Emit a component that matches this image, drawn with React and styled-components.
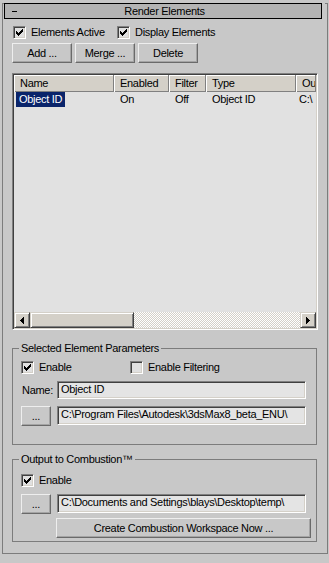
import React from "react";
import styled, { createGlobalStyle } from "styled-components";

const GlobalStyle = createGlobalStyle`
  html, body {
    margin: 0;
    padding: 0;
    background: #c8c8c8;
  }
  body {
    font-family: "Liberation Sans", Arial, sans-serif;
    font-size: 11px;
    line-height: 13px;
    color: #000;
    letter-spacing: -0.3px;
  }
  * {
    box-sizing: border-box;
  }
`;

const FACE = "#c8c8c8";

const Page = styled.div`
  width: 329px;
  height: 563px;
  background: ${FACE};
  padding-top: 11px;
  overflow: hidden;
`;

const Rollout = styled.div`
  position: relative;
  margin-left: 2px;
  width: 326px;
  height: 551px;
  border: 1px solid #7c7c7c;
  border-top: none;

  &::before,
  &::after {
    content: "";
    position: absolute;
    top: 0;
    width: 2px;
    height: 1px;
    background: #7c7c7c;
  }
  &::before {
    left: 0;
  }
  &::after {
    right: 0;
  }
`;

const TitleBar = styled.div`
  position: relative;
  z-index: 1;
  display: flex;
  align-items: center;
  margin: -8px 0 0 1px;
  width: 318px;
  height: 16px;
  padding: 0 7px;
  background: #b4b4b4;
  border: 1px solid #000;
`;

const Collapse = styled.span`
  width: 5px;
  height: 1px;
  background: #000;
`;

const TitleText = styled.span`
  flex: 1;
  text-align: center;
  padding-right: 2px;
`;

const Body = styled.div`
  display: flex;
  flex-direction: column;
  padding-left: 9px;
`;

const CheckRow = styled.div`
  display: grid;
  grid-template-columns: ${(p) => p.$first}px auto;
  margin-top: ${(p) => p.$top}px;
  padding-left: ${(p) => p.$left || 0}px;
  height: 13px;
`;

const CheckLabel = styled.label`
  display: flex;
  align-items: center;
  gap: 5px;
  height: 13px;
  white-space: nowrap;
`;

const Box = styled.span`
  display: flex;
  align-items: center;
  justify-content: center;
  flex: none;
  width: 13px;
  height: 13px;
  border: 1px solid;
  border-color: #808080 #fff #fff #808080;
  box-shadow: inset 1px 1px #404040, inset -1px -1px #d4d0c8;
  background: #e0e0e0;
`;

const CheckMark = () => (
  <svg width="7" height="7" viewBox="0 0 7 7" shapeRendering="crispEdges">
    <path
      fill="#000"
      d="M6 0h1v1h-1z M5 1h2v1h-2z M0 2h1v1h-1z M4 2h3v1h-3z M0 3h2v1h-2z M3 3h3v1h-3z M0 4h5v1h-5z M1 5h3v1h-3z M2 6h1v1h-1z"
    />
  </svg>
);

const Check = ({ checked, children }) => (
  <CheckLabel>
    <Box>{checked && <CheckMark />}</Box>
    <span>{children}</span>
  </CheckLabel>
);

const ButtonRow = styled.div`
  display: flex;
  gap: 3px;
  margin-top: 4px;
`;

const Button = styled.button`
  width: ${(p) => p.$width}px;
  height: 20px;
  margin: 0;
  margin-left: ${(p) => p.$left || 0}px;
  padding: 0;
  font: inherit;
  letter-spacing: inherit;
  color: #000;
  background: ${FACE};
  border: 1px solid;
  border-color: #eeeeee #6a6a6a #6a6a6a #eeeeee;
  box-shadow: inset -1px -1px #a4a4a4;
`;

const ListView = styled.div`
  display: flex;
  flex-direction: column;
  margin-top: 10px;
  width: 306px;
  height: 257px;
  border: 1px solid;
  border-color: #808080 #fff #fff #808080;
  box-shadow: inset 1px 1px #404040, inset -1px -1px #d4d0c8;
  padding: 1px;
  background: #e1e1e1;
  overflow: hidden;
`;

const Columns = styled.div`
  display: grid;
  grid-template-columns: 100px 55px 37px 90px 1fr;
  overflow: hidden;
  height: ${(p) => p.$height}px;
`;

const HeaderCell = styled.div`
  height: 17px;
  line-height: 17px;
  padding-left: ${(p) => p.$pad ?? 6}px;
  background: #d4d0c8;
  border-right: 1px solid #808080;
  box-shadow: inset 1px 1px #fff, inset 0 -1px #808080;
  white-space: nowrap;
  overflow: hidden;
`;

const Cell = styled.div`
  height: 15px;
  line-height: 15px;
  padding-left: ${(p) => p.$pad ?? 6}px;
  white-space: nowrap;
  overflow: hidden;
`;

const Selected = styled.span`
  display: inline-block;
  margin-left: 2px;
  padding: 0 3px;
  height: 15px;
  background: #0a246a;
  color: #fff;
`;

const ListBody = styled.div`
  flex: 1;
`;

const ScrollBar = styled.div`
  display: flex;
  height: 16px;
`;

const Raised = styled.div`
  flex: none;
  display: flex;
  align-items: center;
  justify-content: center;
  width: ${(p) => p.$width}px;
  height: 16px;
  background: #d4d0c8;
  border: 1px solid;
  border-color: #d4d0c8 #404040 #404040 #d4d0c8;
  box-shadow: inset 1px 1px #fff, inset -1px -1px #808080;
`;

const Track = styled.div`
  flex: 1;
  background: repeating-conic-gradient(#d4d0c8 0 25%, #fff 0 50%) 0 0 / 2px 2px;
`;

const Arrow = ({ dir }) => (
  <svg width="4" height="7" viewBox="0 0 4 7" shapeRendering="crispEdges">
    <path
      fill="#000"
      transform={dir === "right" ? "matrix(-1 0 0 1 4 0)" : undefined}
      d="M3 0h1v7h-1z M2 1h1v5h-1z M1 2h1v3h-1z M0 3h1v1h-1z"
    />
  </svg>
);

const Group = styled.div`
  display: flex;
  flex-direction: column;
  margin-top: ${(p) => p.$top}px;
  width: 305px;
  height: ${(p) => p.$height}px;
  border: 1px solid #7c7c7c;
  padding-left: 8px;
`;

const Legend = styled.div`
  align-self: flex-start;
  margin: -7px 0 0 -2px;
  padding: 0 2px;
  height: 13px;
  background: ${FACE};
  white-space: nowrap;
`;

const FieldRow = styled.div`
  display: grid;
  grid-template-columns: ${(p) => p.$cols};
  column-gap: ${(p) => p.$gap || 0}px;
  align-items: start;
  margin-top: ${(p) => p.$top}px;
`;

const FieldLabel = styled.span`
  padding-left: 1px;
  line-height: 18px;
`;

const TextField = styled.div`
  height: ${(p) => p.$height}px;
  line-height: ${(p) => p.$height - 4}px;
  padding-left: 3px;
  border: 1px solid;
  border-color: #808080 #fff #fff #808080;
  box-shadow: inset 1px 1px #404040, inset -1px -1px #d4d0c8;
  background: #e4e4e4;
  white-space: nowrap;
  overflow: hidden;
`;

const App = () => (
  <Page>
    <GlobalStyle />
    <Rollout>
      <TitleBar>
        <Collapse />
        <TitleText>Render Elements</TitleText>
      </TitleBar>
      <Body>
        <CheckRow $first={104} $top={7} $left={1}>
          <Check checked>Elements Active</Check>
          <Check checked>Display Elements</Check>
        </CheckRow>
        <ButtonRow>
          <Button $width={60}>Add ...</Button>
          <Button $width={60}>Merge ...</Button>
          <Button $width={60}>Delete</Button>
        </ButtonRow>

        <ListView>
          <Columns $height={17}>
            <HeaderCell>Name</HeaderCell>
            <HeaderCell>Enabled</HeaderCell>
            <HeaderCell>Filter</HeaderCell>
            <HeaderCell>Type</HeaderCell>
            <HeaderCell $pad={6}>Ou</HeaderCell>
          </Columns>
          <ListBody>
            <Columns $height={15}>
              <Cell $pad={0}>
                <Selected>Object ID</Selected>
              </Cell>
              <Cell>On</Cell>
              <Cell>Off</Cell>
              <Cell>Object ID</Cell>
              <Cell $pad={3}>C:\</Cell>
            </Columns>
          </ListBody>
          <ScrollBar>
            <Raised $width={16}>
              <Arrow dir="left" />
            </Raised>
            <Raised $width={104} />
            <Track />
            <Raised $width={16}>
              <Arrow dir="right" />
            </Raised>
          </ScrollBar>
        </ListView>

        <Group $top={18} $height={97}>
          <Legend>Selected Element Parameters</Legend>
          <CheckRow $first={109} $top={6}>
            <Check checked>Enable</Check>
            <Check>Enable Filtering</Check>
          </CheckRow>
          <FieldRow $cols="36px 249px" $top={7}>
            <FieldLabel>Name:</FieldLabel>
            <TextField $height={18}>Object ID</TextField>
          </FieldRow>
          <FieldRow $cols="30px 249px" $gap={6} $top={7}>
            <Button $width={30}>...</Button>
            <TextField $height={19}>C:\Program Files\Autodesk\3dsMax8_beta_ENU\</TextField>
          </FieldRow>
        </Group>

        <Group $top={14} $height={83}>
          <Legend>Output to Combustion™</Legend>
          <CheckRow $first={109} $top={8}>
            <Check checked>Enable</Check>
          </CheckRow>
          <FieldRow $cols="30px 249px" $gap={6} $top={7}>
            <Button $width={30}>...</Button>
            <TextField $height={19}>C:\Documents and Settings\blays\Desktop\temp\</TextField>
          </FieldRow>
          <FieldRow $cols="255px" $top={4}>
            <Button $width={255} $left={35}>
              Create Combustion Workspace Now ...
            </Button>
          </FieldRow>
        </Group>
      </Body>
    </Rollout>
  </Page>
);

export default App;
